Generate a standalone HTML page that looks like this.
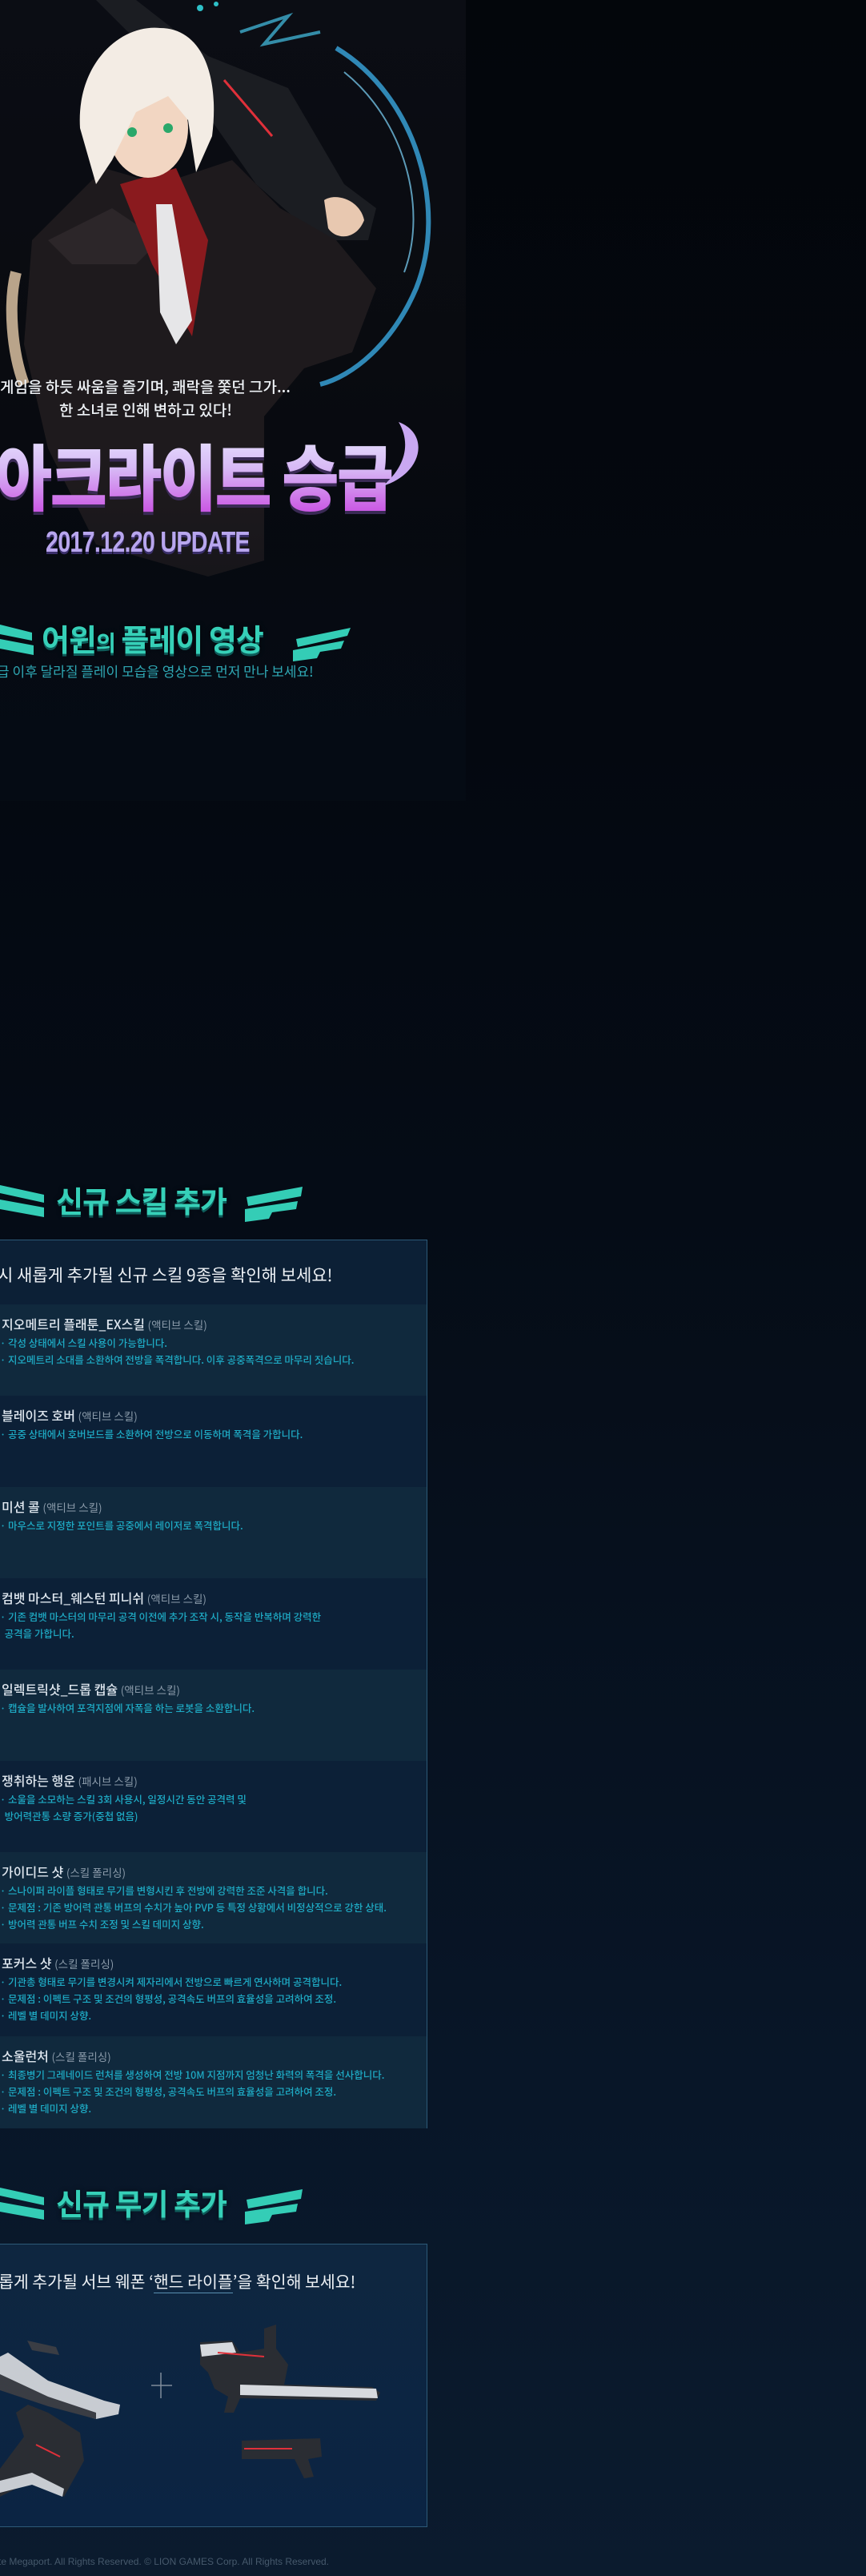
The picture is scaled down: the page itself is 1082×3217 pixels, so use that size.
<!DOCTYPE html>
<html><head><meta charset="utf-8">
<style>
*{margin:0;padding:0;box-sizing:border-box}
html,body{width:1082px;height:3217px;overflow:hidden}
body{position:relative;background:linear-gradient(180deg,#03060b 0px,#040810 900px,#050c16 1500px,#081628 2600px,#0b1b2e 3217px);font-family:"Liberation Sans","Noto Sans CJK KR",sans-serif;}
.abs{position:absolute}
.kr{font-family:"Noto Sans CJK KR","Liberation Sans",sans-serif}
.hero{left:0;top:0;width:582px;height:1000px;background:linear-gradient(180deg,#0b0d14 0,#090b10 450px,#06090f 700px,#050b14 1000px);overflow:hidden}
.sec-title{font-weight:700;color:#36d0b8;text-shadow:0 3px 0 #0e5c5a,0 0 6px rgba(0,0,0,.6);white-space:nowrap;letter-spacing:-1px}
.box{left:0;width:534px;border:1px solid #2c5a78;border-left:none;background:#0c2036}
.row{position:absolute;left:0;width:533px;height:114px}
.row.l{background:#10293d}
.row.d{background:#0c2037}
.rt{position:absolute;left:2px;top:12px;font-size:16px;color:#dfe7ef;white-space:nowrap;font-weight:500}
.rt span{font-size:13.5px;color:#8c9cab;font-weight:400}
.rd{position:absolute;left:0;top:37px;font-size:12.5px;line-height:21px;color:#1eaac4;white-space:nowrap;font-weight:500}
</style></head><body>

<div class="abs hero">
<svg width="582" height="1000" viewBox="0 0 582 1000">
 <defs>
  <linearGradient id="fade" x1="0" y1="0" x2="0" y2="1"><stop offset="0" stop-color="#050b14" stop-opacity="0"/><stop offset="1" stop-color="#050b14" stop-opacity="1"/></linearGradient>
 </defs>
 <path d="M420 60 C520 120 560 260 520 360 C490 430 440 470 400 480" fill="none" stroke="#3aa8e0" stroke-width="6" opacity=".8"/>
 <path d="M430 90 C505 150 535 260 505 340" fill="none" stroke="#7fd8ff" stroke-width="2" opacity=".7"/>
 <path d="M300 40 L360 20 L330 55 L400 40" fill="none" stroke="#46c4e8" stroke-width="4" opacity=".7"/>
 <circle cx="250" cy="10" r="4" fill="#2ec0c8"/><circle cx="270" cy="5" r="3" fill="#2ec0c8"/>
 <path d="M120 0 L170 0 L260 70 L360 110 L430 230 L470 260 L460 300 L400 300 L320 230 L250 130 Z" fill="#1b1d22"/>
 <path d="M280 100 L340 170" stroke="#e0303a" stroke-width="3"/>
 <path d="M40 300 L130 210 L200 230 L290 200 L350 260 L420 300 L470 360 L440 440 L380 460 L330 520 L330 700 L260 720 L120 680 L60 560 L30 430 Z" fill="#1e1a1d"/>
 <path d="M60 300 L140 260 L200 300 L170 330 L90 330 Z" fill="#2c2629"/>
 <path d="M150 230 L220 210 L260 300 L240 420 L190 330 Z" fill="#8a1a1e"/>
 <path d="M195 255 L215 255 L240 400 L220 430 L200 390 Z" fill="#e6e6e8"/>
 <ellipse cx="185" cy="160" rx="50" ry="62" fill="#f2d6c2"/>
 <path d="M100 160 C95 80 150 30 200 35 C250 35 275 90 265 170 L245 215 L235 150 L210 120 L170 140 L140 200 L120 230 Z" fill="#f3ece4"/>
 <circle cx="165" cy="165" r="6" fill="#2aa86a"/><circle cx="210" cy="160" r="6" fill="#2aa86a"/>
 <path d="M20 340 C10 380 15 440 30 480" stroke="#b9a48a" stroke-width="14" fill="none"/>
 <path d="M405 250 C420 240 450 250 455 275 C445 300 420 300 410 285 Z" fill="#e8c8b0"/>
 <rect x="0" y="600" width="582" height="400" fill="url(#fade)"/>
</svg>
</div>

<div class="abs kr" style="left:0;top:468px;width:380px;font-size:19px;line-height:29px;color:#eef2f6;font-weight:500;white-space:nowrap">
 <div>게임을 하듯 싸움을 즐기며, 쾌락을 쫓던 그가...</div>
 <div style="padding-left:74px">한 소녀로 인해 변하고 있다!</div>
</div>
<div class="abs kr" style="left:-6px;top:538px;font-size:90px;line-height:106px;font-weight:900;letter-spacing:-3px;white-space:nowrap;transform:scaleX(.86);transform-origin:left;background:linear-gradient(180deg,#e8e6ff 0%,#d7b8f5 45%,#c94ee2 100%);-webkit-background-clip:text;background-clip:text;color:transparent;filter:drop-shadow(0 4px 0 #3a2a55)">아크라이트 승급</div>
<svg class="abs" style="left:468px;top:522px" width="70" height="90"><path d="M30 5 C70 20 60 70 10 85 C40 60 45 30 30 5Z" fill="#c9a8f2"/></svg>
<div class="abs" style="left:57px;top:655px;font-size:36px;line-height:44px;font-weight:700;color:#b8a6ee;letter-spacing:-1px;transform:scaleX(.8);transform-origin:left;white-space:nowrap;text-shadow:0 3px 0 #3a2f6a">2017.12.20 UPDATE</div>

<svg class="abs" style="left:0;top:770px" width="460" height="60">
 <path d="M0 10 L40 20 L40 30 L0 22Z M0 28 L42 36 L42 48 L0 40Z" fill="#34cdb6"/>
 <path d="M370 28 L438 14 L434 24 L372 38Z M366 42 L430 30 L426 40 L400 44 L396 52 L366 56Z" fill="#34cdb6"/>
</svg>
<div class="abs kr sec-title" style="left:52px;top:770px;font-size:38px;line-height:54px">어윈<span style="font-size:27px">의</span> 플레이 영상</div>
<div class="abs kr" style="left:-4px;top:826px;font-size:17px;line-height:24px;color:#2fa8b4;white-space:nowrap">급 이후 달라질 플레이 모습을 영상으로 먼저 만나 보세요!</div>

<svg class="abs" style="left:0;top:1470px" width="400" height="60">
 <path d="M0 10 L55 22 L55 32 L0 20Z M0 28 L55 38 L55 50 L0 40Z" fill="#34cdb6"/>
 <path d="M308 25 L378 12 L376 24 L310 36Z M306 40 L372 30 L370 40 L340 44 L336 52 L306 56Z" fill="#34cdb6"/>
</svg>
<div class="abs kr sec-title" style="left:70px;top:1472px;font-size:37px;line-height:52px">신규 스킬 추가</div>

<div class="abs box" style="top:1548px;height:1110px">
 <div class="abs kr" style="left:-3px;top:28px;font-size:21px;line-height:30px;color:#eef2f6;white-space:nowrap">시 새롭게 추가될 신규 스킬 9종을 확인해 보세요!</div>
 <div class="kr">
 <div class="row l" style="top:80px"><div class="rt">지오메트리 플래툰_EX스킬 <span>(액티브 스킬)</span></div><div class="rd">· 각성 상태에서 스킬 사용이 가능합니다.<br>· 지오메트리 소대를 소환하여 전방을 폭격합니다. 이후 공중폭격으로 마무리 짓습니다.</div></div>
 <div class="row d" style="top:194px"><div class="rt">블레이즈 호버 <span>(액티브 스킬)</span></div><div class="rd">· 공중 상태에서 호버보드를 소환하여 전방으로 이동하며 폭격을 가합니다.</div></div>
 <div class="row l" style="top:308px"><div class="rt">미션 콜 <span>(액티브 스킬)</span></div><div class="rd">· 마우스로 지정한 포인트를 공중에서 레이저로 폭격합니다.</div></div>
 <div class="row d" style="top:422px"><div class="rt">컴뱃 마스터_웨스턴 피니쉬 <span>(액티브 스킬)</span></div><div class="rd">· 기존 컴뱃 마스터의 마무리 공격 이전에 추가 조작 시, 동작을 반복하며 강력한<br>&nbsp;&nbsp;공격을 가합니다.</div></div>
 <div class="row l" style="top:536px"><div class="rt">일렉트릭샷_드롭 캡슐 <span>(액티브 스킬)</span></div><div class="rd">· 캡슐을 발사하여 포격지점에 자폭을 하는 로봇을 소환합니다.</div></div>
 <div class="row d" style="top:650px"><div class="rt">쟁취하는 행운 <span>(패시브 스킬)</span></div><div class="rd">· 소울을 소모하는 스킬 3회 사용시, 일정시간 동안 공격력 및<br>&nbsp;&nbsp;방어력관통 소량 증가(중첩 없음)</div></div>
 <div class="row l" style="top:764px"><div class="rt">가이디드 샷 <span>(스킬 폴리싱)</span></div><div class="rd">· 스나이퍼 라이플 형태로 무기를 변형시킨 후 전방에 강력한 조준 사격을 합니다.<br>· 문제점 : 기존 방어력 관통 버프의 수치가 높아 PVP 등 특정 상황에서 비정상적으로 강한 상태.<br>· 방어력 관통 버프 수치 조정 및 스킬 데미지 상향.</div></div>
 <div class="row d" style="top:878px"><div class="rt">포커스 샷 <span>(스킬 폴리싱)</span></div><div class="rd">· 기관총 형태로 무기를 변경시켜 제자리에서 전방으로 빠르게 연사하며 공격합니다.<br>· 문제점 : 이펙트 구조 및 조건의 형평성, 공격속도 버프의 효율성을 고려하여 조정.<br>· 레벨 별 데미지 상향.</div></div>
 <div class="row l" style="top:994px;height:115px"><div class="rt">소울런처 <span>(스킬 폴리싱)</span></div><div class="rd">· 최종병기 그레네이드 런처를 생성하여 전방 10M 지점까지 엄청난 화력의 폭격을 선사합니다.<br>· 문제점 : 이펙트 구조 및 조건의 형평성, 공격속도 버프의 효율성을 고려하여 조정.<br>· 레벨 별 데미지 상향.</div></div>
 </div>
</div>

<svg class="abs" style="left:0;top:2722px" width="400" height="60">
 <path d="M0 10 L55 22 L55 32 L0 20Z M0 28 L55 38 L55 50 L0 40Z" fill="#34cdb6"/>
 <path d="M308 25 L378 12 L376 24 L310 36Z M306 40 L372 30 L370 40 L340 44 L336 52 L306 56Z" fill="#34cdb6"/>
</svg>
<div class="abs kr sec-title" style="left:70px;top:2724px;font-size:37px;line-height:52px">신규 무기 추가</div>

<div class="abs box" style="top:2802px;height:354px;background:linear-gradient(180deg,#0e2640,#0b2443)">
 <div class="abs kr" style="left:-2px;top:30px;font-size:20.5px;line-height:30px;color:#eef2f6;white-space:nowrap">롭게 추가될 서브 웨폰 ‘<span style="border-bottom:1px solid #5a8fb0">핸드 라이플</span>’을 확인해 보세요!</div>
 <svg class="abs" style="left:0;top:100px" width="533" height="250">
  <path d="M0 40 L10 35 L60 70 L130 95 L150 100 L148 112 L120 118 L60 100 L0 80Z" fill="#c8ccd2"/>
  <path d="M0 62 L60 90 L120 110 L120 118 L60 102 L0 82Z" fill="#3a3d44"/>
  <path d="M34 20 L70 28 L74 38 L40 32Z" fill="#3a3d44"/>
  <path d="M0 180 L30 140 L20 110 L35 100 L60 110 L100 135 L105 170 L80 215 L40 195 L0 215Z" fill="#2a2d33"/>
  <path d="M0 195 L40 185 L80 205 L78 215 L40 200 L0 210Z" fill="#c8ccd2"/>
  <path d="M45 150 L75 165" stroke="#e0303a" stroke-width="2"/>
  <path d="M201 60 L201 92 M189 76 L215 76" stroke="#7f8c9a" stroke-width="1.5"/>
  <path d="M250 22 L290 20 L300 35 L330 30 L330 5 L345 0 L345 30 L360 50 L355 75 L465 78 L475 85 L470 95 L300 92 L292 110 L280 110 L285 90 L268 80 L260 60 L250 50Z" fill="#2a2d33"/>
  <path d="M300 75 L470 80 L472 92 L300 88Z" fill="#d6d9de"/>
  <path d="M250 25 L290 22 L295 35 L252 40Z" fill="#d6d9de"/>
  <path d="M272 35 L330 40" stroke="#e0303a" stroke-width="2"/>
  <path d="M302 145 L400 142 L402 165 L385 168 L392 190 L380 192 L368 168 L302 168Z" fill="#2a2d33"/>
  <path d="M305 155 L365 155" stroke="#e0303a" stroke-width="2"/>
 </svg>
</div>

<div class="abs" style="left:-2px;top:3191px;font-size:12px;line-height:16px;color:#46596c;white-space:nowrap">te Megaport. All Rights Reserved. © LION GAMES Corp. All Rights Reserved.</div>
</body></html>
